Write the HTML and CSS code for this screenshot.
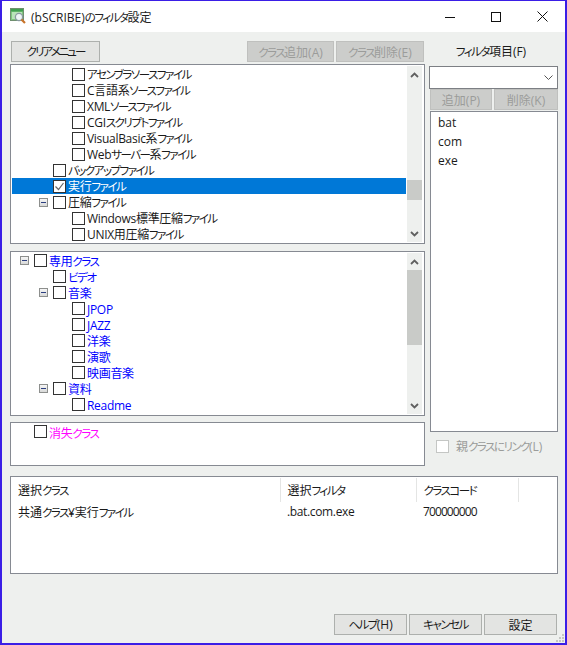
FILE: index.html
```html
<!DOCTYPE html>
<html lang="ja">
<head>
<meta charset="utf-8">
<title>(bSCRIBE)のフィルタ設定</title>
<link rel="stylesheet" href="styles.css">
</head>
<body>
<div class="window">
  <header class="titlebar">
    <svg class="app-icon" width="17" height="17" viewBox="0 0 17 17">
      <rect x="0.5" y="0.5" width="13" height="12" fill="#7fc77f" stroke="#6f8f6f"/>
      <rect x="1" y="1" width="12" height="2.5" fill="#3f9f4f"/>
      <rect x="2" y="4" width="10" height="7" fill="#b9e4b9"/>
      <circle cx="9" cy="9" r="3.6" fill="#eef6f6" stroke="#8a9aa0" stroke-width="1.3"/>
      <path d="M11.5 11.5l3.5 3.5" stroke="#c8742a" stroke-width="2.2"/>
    </svg>
    <span class="title">(bSCRIBE)<span class="k">のフィルタ</span>設定</span>
    <div class="controls">
      <span class="ctl"><svg width="10" height="10" viewBox="0 0 10 10"><path d="M0 5.5h10" stroke="#111" fill="none"/></svg></span>
      <span class="ctl"><svg width="10" height="10" viewBox="0 0 10 10"><rect x="0.5" y="0.5" width="9" height="9" stroke="#111" fill="none"/></svg></span>
      <span class="ctl"><svg width="11" height="11" viewBox="0 0 11 11"><path d="M0.5 0.5l10 10M10.5 0.5l-10 10" stroke="#111" fill="none"/></svg></span>
    </div>
  </header>

  <main class="body">
    <div class="top">
      <section class="left">
        <div class="toolbar">
          <button class="btn clear"><span class="k">クリアメニュー</span></button>
          <span class="spacer"></span>
          <button class="btn off class-btn"><span class="k">クラス</span>追加(A)</button>
          <button class="btn off class-btn"><span class="k">クラス</span>削除(E)</button>
        </div>

        <div class="tree tree-a">
          <div class="rows">
            <div class="row l3"><i class="cb"></i><span><span class="k">アセンブラソースファイル</span></span></div>
            <div class="row l3"><i class="cb"></i><span>C言語系<span class="k">ソースファイル</span></span></div>
            <div class="row l3"><i class="cb"></i><span>XML<span class="k">ソースファイル</span></span></div>
            <div class="row l3"><i class="cb"></i><span>CGI<span class="k">スクリプトファイル</span></span></div>
            <div class="row l3"><i class="cb"></i><span>VisualBasic系<span class="k">ファイル</span></span></div>
            <div class="row l3"><i class="cb"></i><span>Web<span class="k">サーバー</span>系<span class="k">ファイル</span></span></div>
            <div class="row l2"><i class="cb"></i><span><span class="k">バックアップファイル</span></span></div>
            <div class="row l2 selected"><i class="cb"><svg width="11" height="11" viewBox="0 0 11 11"><path d="M1.5 5.5l3 3 5-6.5" stroke="#666" stroke-width="1.2" fill="none"/></svg></i><span>実行<span class="k">ファイル</span></span></div>
            <div class="row l2"><b class="exp"></b><i class="cb"></i><span>圧縮<span class="k">ファイル</span></span></div>
            <div class="row l3"><i class="cb"></i><span>Windows標準圧縮<span class="k">ファイル</span></span></div>
            <div class="row l3"><i class="cb"></i><span>UNIX用圧縮<span class="k">ファイル</span></span></div>
          </div>
          <div class="scroll">
            <span class="sb"><svg width="9" height="6" viewBox="0 0 9 6"><path d="M1 5l3.5-3.5L8 5" stroke="#606060" stroke-width="1.8" fill="none"/></svg></span>
            <span class="track"><span class="thumb thumb-a"></span></span>
            <span class="sb"><svg width="9" height="6" viewBox="0 0 9 6"><path d="M1 1l3.5 3.5L8 1" stroke="#606060" stroke-width="1.8" fill="none"/></svg></span>
          </div>
        </div>

        <div class="tree tree-b">
          <div class="rows blue">
            <div class="row l1"><b class="exp"></b><i class="cb"></i><span>専用<span class="k">クラス</span></span></div>
            <div class="row l2"><i class="cb"></i><span><span class="k">ビデオ</span></span></div>
            <div class="row l2"><b class="exp"></b><i class="cb"></i><span>音楽</span></div>
            <div class="row l3"><i class="cb"></i><span>JPOP</span></div>
            <div class="row l3"><i class="cb"></i><span>JAZZ</span></div>
            <div class="row l3"><i class="cb"></i><span>洋楽</span></div>
            <div class="row l3"><i class="cb"></i><span>演歌</span></div>
            <div class="row l3"><i class="cb"></i><span>映画音楽</span></div>
            <div class="row l2"><b class="exp"></b><i class="cb"></i><span>資料</span></div>
            <div class="row l3"><i class="cb"></i><span>Readme</span></div>
          </div>
          <div class="scroll">
            <span class="sb"><svg width="9" height="6" viewBox="0 0 9 6"><path d="M1 5l3.5-3.5L8 5" stroke="#606060" stroke-width="1.8" fill="none"/></svg></span>
            <span class="track"><span class="thumb thumb-b"></span></span>
            <span class="sb"><svg width="9" height="6" viewBox="0 0 9 6"><path d="M1 1l3.5 3.5L8 1" stroke="#606060" stroke-width="1.8" fill="none"/></svg></span>
          </div>
        </div>

        <div class="tree tree-c">
          <div class="rows magenta">
            <div class="row l1"><i class="cb"></i><span>消失<span class="k">クラス</span></span></div>
          </div>
        </div>
      </section>

      <aside class="right">
        <div class="filter-label"><span class="k">フィルタ</span>項目(F)</div>
        <div class="combo">
          <svg width="9" height="5" viewBox="0 0 9 5"><path d="M0.5 0.5l4 4 4-4" stroke="#555" fill="none"/></svg>
        </div>
        <div class="filter-btns">
          <button class="btn off add">追加(P)</button>
          <button class="btn off del">削除(K)</button>
        </div>
        <ul class="filter-list">
          <li>bat</li>
          <li>com</li>
          <li>exe</li>
        </ul>
        <div class="link"><i class="cb disabled"></i><span>親<span class="k">クラスにリンク</span>(L)</span></div>
      </aside>
    </div>

    <div class="table-box">
      <table>
        <thead>
          <tr><th class="c1">選択<span class="k">クラス</span></th><th class="c2">選択<span class="k">フィルタ</span></th><th class="c3"><span class="k">クラスコード</span></th><th></th></tr>
        </thead>
        <tbody>
          <tr><td>共通<span class="k">クラス</span>¥実行<span class="k">ファイル</span></td><td class="ext">.bat.com.exe</td><td class="num">700000000</td><td></td></tr>
        </tbody>
      </table>
    </div>

    <footer class="footer">
      <button class="btn foot"><span class="k">ヘルプ</span>(H)</button>
      <button class="btn foot"><span class="k">キャンセル</span></button>
      <button class="btn foot">設定</button>
    </footer>
  </main>

  <svg class="grip" width="9" height="8" viewBox="0 0 9 8">
    <path d="M7 0h2v2H7zM4 3h2v2H4zM7 3h2v2H7zM1 6h2v2H1zM4 6h2v2H4zM7 6h2v2H7z" fill="#c4c6c4"/>
  </svg>
</div>
</body>
</html>
```

FILE: styles.css
```css
* { box-sizing: border-box; }
html, body { margin: 0; padding: 0; background: #eef0ee; }
body {
  font-family: "Open Sans", "Noto Sans CJK JP", sans-serif;
  font-size: 12px;
  font-feature-settings: "palt";
  color: #1a1a1a;
}
.k { font-size: 11.5px; letter-spacing: -1.5px; }
.window {
  position: relative;
  width: 567px;
  height: 645px;
  border: 2px solid #3a1ee6;
  border-top-width: 1px;
  background: #eef0ee;
  overflow: hidden;
  display: flex;
  flex-direction: column;
}
.titlebar {
  height: 31px;
  flex: none;
  background: #fff;
  display: flex;
  align-items: center;
  padding-left: 8px;
}
.app-icon { margin-right: 4px; }
.title { font-size: 12px; color: #222; }
.controls { margin-left: auto; display: flex; }
.ctl { width: 46px; height: 31px; display: flex; align-items: center; justify-content: center; }

.body { flex: 1; padding: 9px 7px 0 8px; display: flex; flex-direction: column; }
.top { display: flex; height: 425px; }
.left { width: 415px; flex: none; display: flex; flex-direction: column; }
.right { width: 128px; margin-left: 5px; flex: none; display: flex; flex-direction: column; }

.btn {
  font: inherit;
  font-feature-settings: inherit;
  height: 21px;
  padding: 0;
  border: 1px solid #adb0ad;
  background: #e3e4e2;
  color: #1a1a1a;
}
.btn.off { background: #cccdcb; border-color: #bfc0be; color: #9b9c9a; }
.toolbar { display: flex; height: 21px; gap: 2px; }
.spacer { flex: 1; }
.clear { width: 89px; margin-left: 1px; }
.clear .k { letter-spacing: -2px; }
.class-btn { width: 87px; margin-right: 0; }
.class-btn:last-child { width: 88px; margin-right: 1px; }

.tree {
  border: 1px solid #868a92;
  background: #fff;
  display: flex;
  padding-right: 2px;
  padding-left: 1px;
  overflow: hidden;
}
.tree-a { height: 180px; margin-top: 2px; padding-top: 1px; padding-bottom: 1px; }
.tree-b { height: 165px; margin-top: 7px; }
.tree-c { height: 44px; margin-top: 6px; }
.rows { flex: 1; min-width: 0; }
.tree-a .rows { margin-right: 1px; }
.tree-b .rows { margin-right: 1px; }
.blue { color: #0000ff; }
.magenta { color: #ff00ff; }
.row { height: 16px; display: flex; align-items: center; white-space: nowrap; line-height: 16px; }
.row > span { margin-left: 2px; padding-top: 2px; letter-spacing: -0.3px; }
.tree-b .row > span { padding-top: 4px; }
.tree-c .row > span { padding-top: 6px; }
.l1 { padding-left: 22px; }
.l2 { padding-left: 41px; }
.l3 { padding-left: 60px; }
.l1 .exp { margin-left: -14px; }
.l2 .exp { margin-left: -14px; }
.selected { background: #0078d7; color: #fff; }
.cb {
  width: 13px;
  height: 13px;
  flex: none;
  border: 1px solid #333;
  background: #fff;
  display: flex;
  align-items: center;
  justify-content: center;
}
.cb.disabled { border-color: #c4c6c4; }
.exp {
  width: 9px;
  height: 9px;
  flex: none;
  margin-right: 5px;
  border: 1px solid #8d8f8d;
  background: linear-gradient(#f6f6f6, #d8d9d8);
  position: relative;
}
.exp::after { content: ""; position: absolute; left: 1px; top: 3px; width: 5px; height: 1px; background: #2c3f80; }

.scroll { width: 15px; flex: none; display: flex; flex-direction: column; background: #eef0ee; }
.tree-b .scroll { margin: 1px 0; }
.sb { height: 17px; flex: none; display: flex; align-items: center; justify-content: center; }
.track { flex: 1; display: block; }
.thumb { display: block; background: #c9cbc8; }
.thumb-a { margin-top: 97px; height: 20px; }
.thumb-b { height: 75px; }

.filter-label { height: 25px; text-align: center; line-height: 22px; padding-right: 6px; }
.combo {
  height: 23px;
  margin-left: -1px;
  background: #fff;
  border: 1px solid #7c7f84;
  display: flex;
  align-items: center;
  justify-content: flex-end;
  padding-right: 4px;
}
.filter-btns { display: flex; gap: 2px; height: 21px; }
.add { width: 62px; }
.del { width: 64px; }
.filter-list {
  list-style: none;
  margin: 1px 0 0;
  padding: 2px 0 0 7px;
  height: 321px;
  background: #fff;
  border: 1px solid #868a92;
}
.filter-list li { height: 19px; line-height: 18px; }
.link { display: flex; align-items: center; height: 13px; line-height: 13px; margin-top: 8px; padding-left: 6px; color: #9b9c9a; }
.link > span { margin-left: 7px; }

.table-box { height: 98px; margin-top: 10px; background: #fff; border: 1px solid #868a92; padding-top: 1px; }
table { border-collapse: collapse; table-layout: fixed; width: 100%; }
th { font-weight: normal; text-align: left; height: 24px; padding: 0 0 0 7px; border-right: 1px solid #e4e5e4; }
th:last-child { border-right: 0; }
td { height: 19px; padding: 0 0 0 7px; white-space: nowrap; }
.ext { letter-spacing: -0.35px; }
.num { letter-spacing: -0.9px; }
.c1 { width: 269px; }
.c2 { width: 136px; }
.c3 { width: 102px; }

.footer { display: flex; justify-content: flex-end; gap: 2px; margin-top: 40px; padding-right: 1px; }
.foot { width: 73px; }
.grip { position: absolute; right: 1px; bottom: 1px; }
```
